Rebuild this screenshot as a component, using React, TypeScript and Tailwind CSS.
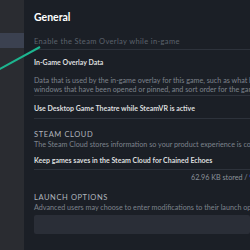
import React from "react";

export default function App() {
  return (
    <div
      className="relative w-[250px] h-[250px] overflow-hidden flex bg-[#1b1f26]"
      style={{ fontFamily: 'Lato, "Noto Sans", sans-serif' }}
    >
      <div className="w-[24px] shrink-0 bg-[#2a2c31] flex flex-col">
        <div className="h-[33px]" />
        <div className="h-[15px] bg-[#3b4150]" />
      </div>
      <div className="flex-1 min-w-0 pl-[10px] flex flex-col">
        <div className="h-[34px] flex items-center pt-[1px]">
          <span className="text-[10.5px] font-bold text-white leading-none">General</span>
        </div>
        <div className="h-[16px] flex items-center border-b border-[#2d323b]">
          <span className="text-[7.5px] tracking-[0.35px] text-[#5b626c] whitespace-nowrap leading-none">
            Enable the Steam Overlay while in-game
          </span>
        </div>
        <div className="h-[25px] flex items-center">
          <span className="text-[7px] font-bold text-[#dcdedf] whitespace-nowrap leading-none">
            In-Game Overlay Data
          </span>
        </div>
        <div className="h-[21px] flex flex-col justify-center border-b border-[#2d323b] text-[7.2px] text-[#7d838c] whitespace-nowrap leading-[9px]">
          <span>Data that is used by the in-game overlay for this game, such as what browser tabs</span>
          <span>windows that have been opened or pinned, and sort order for the game overview</span>
        </div>
        <div className="h-[23px] flex items-center pt-[3px] border-b border-[#2d323b]">
          <span className="text-[7px] font-bold text-[#dcdedf] whitespace-nowrap leading-none">
            Use Desktop Game Theatre while SteamVR is active
          </span>
        </div>
        <div className="h-[20px] flex items-end pb-[1px]">
          <span className="text-[7.5px] text-[#b0b5bd] tracking-[0.6px] whitespace-nowrap leading-none">
            STEAM CLOUD
          </span>
        </div>
        <div className="h-[12px] flex items-center">
          <span className="text-[7.2px] text-[#7d838c] whitespace-nowrap leading-none">
            The Steam Cloud stores information so your product experience is consistent across
          </span>
        </div>
        <div className="h-[19px] flex items-center border-b border-[#2d323b]">
          <span className="text-[7px] font-bold text-[#dcdedf] whitespace-nowrap leading-none">
            Keep games saves in the Steam Cloud for Chained Echoes
          </span>
        </div>
        <div className="h-[16px] flex items-center pl-[157px]">
          <span className="text-[7.2px] text-[#8b929a] whitespace-nowrap leading-none">
            62.96 KB stored / <span className="text-[#1a9fff]">95.00 GB</span>
          </span>
        </div>
        <div className="h-[17px] flex items-end pb-[2px]">
          <span className="text-[7.5px] text-[#b0b5bd] tracking-[0.6px] whitespace-nowrap leading-none">
            LAUNCH OPTIONS
          </span>
        </div>
        <div className="h-[10px] flex items-center">
          <span className="text-[7.2px] text-[#7d838c] whitespace-nowrap leading-none">
            Advanced users may choose to enter modifications to their launch options.
          </span>
        </div>
        <div className="h-[2px]" />
        <div className="h-[19px] bg-[#2a2e37] rounded-[2px]" />
      </div>
      <svg className="absolute left-0 top-0" width="250" height="250">
        <line x1="40" y1="47" x2="-2" y2="70" stroke="#1db58f" strokeWidth="2" />
      </svg>
    </div>
  );
}
